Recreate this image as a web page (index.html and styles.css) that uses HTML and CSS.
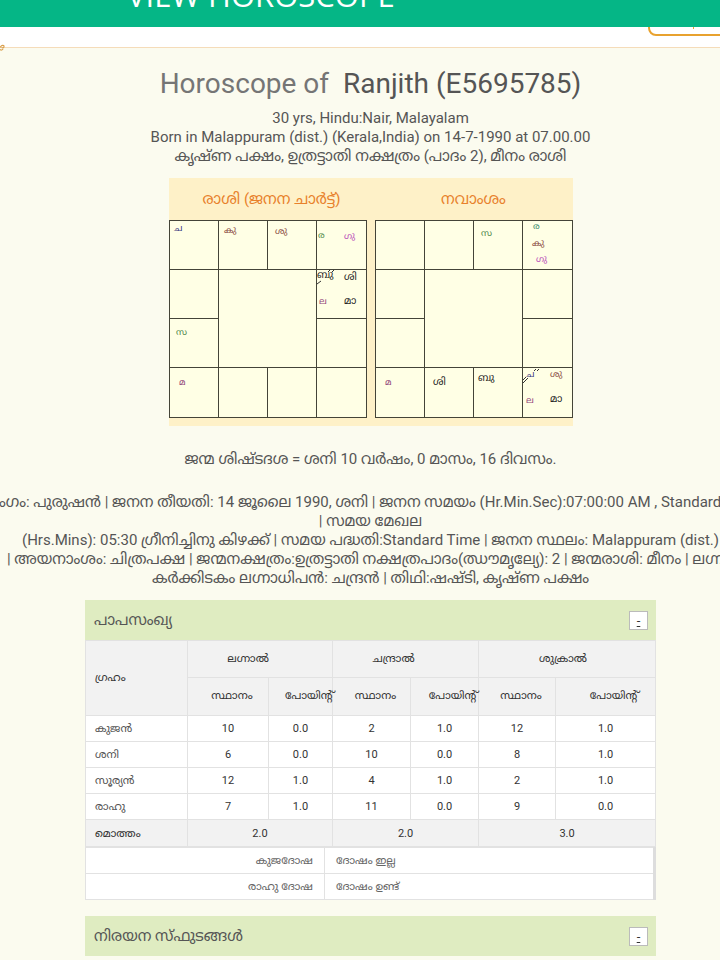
FILE: index.html
```html
<!DOCTYPE html>
<html lang="ml">
<head>
<meta charset="utf-8">
<meta name="viewport" content="width=device-width, initial-scale=1">
<title>View Horoscope</title>
<link rel="stylesheet" href="styles.css">
</head>
<body>
<header class="appbar"><h1>VIEW HOROSCOPE</h1></header>
<div class="toolbar"><button class="outline" type="button" aria-label="Options"><span class="tick"></span></button></div>
<main class="sheet">
  <svg class="curl" viewBox="0 0 6 8" aria-hidden="true"><path d="M0 3.5C1.500 1 4 .8 4 2.500S2.500 4 1.500 3.500M0 5.500C1 6.500 2.500 6 3 5" fill="none" stroke="#d9a04e" stroke-width="1.200"/></svg>
  <div class="content">
    <h2 class="title"><span>Horoscope of</span>&nbsp; Ranjith (E5695785)</h2>
    <div class="lines">
      <p>30 yrs, Hindu:Nair, Malayalam</p>
      <p>Born in Malappuram (dist.) (Kerala,India) on 14-7-1990 at 07.00.00</p>
      <p>കൃഷ്ണ പക്ഷം, ഉത്രട്ടാതി നക്ഷത്രം (പാദം 2), മീനം രാശി</p>
    </div>

    <section class="charts">
      <figure>
        <figcaption class="birth">രാശി (ജനന ചാർട്ട്)</figcaption>
        <svg class="chart" viewBox="0 0 198 198">
          <rect class="frame" x=".5" y=".5" width="197" height="197"/>
          <path class="grid" d="M49.500 0V198M147.500 0V198M0 49.500H198M0 147.500H198M0 98.500H49M148 98.500H198M98.500 0V49M98.500 148V198"/>
          <text x="5" y="11" class="navy">ച</text>
          <text x="55" y="13" class="brown">കു</text>
          <text x="106" y="14" class="brown">ശു</text>
          <text x="149" y="18" class="green">ര</text>
          <text x="175" y="19" class="pink">ഗു</text>
          <text x="148" y="58" class="ink">ബു</text>
          <text x="175" y="60" class="ink">ശി</text>
          <text x="150" y="84" class="plum">ല</text>
          <text x="175" y="84" class="ink">മാ</text>
          <path class="mark" d="M159 52L161 50M163 52L165 50M148 64L152 61"/>
          <text x="7" y="115" class="green">സ</text>
          <text x="10" y="165" class="plum">മ</text>
        </svg>
      </figure>
      <figure>
        <figcaption>നവാംശം</figcaption>
        <svg class="chart" viewBox="0 0 198 198">
          <rect class="frame" x=".5" y=".5" width="197" height="197"/>
          <path class="grid" d="M49.500 0V198M147.500 0V198M0 49.500H198M0 147.500H198M0 98.500H49M148 98.500H198M98.500 0V49M98.500 148V198"/>
          <text x="106" y="16" class="green">സ</text>
          <text x="158" y="9" class="teal">ര</text>
          <text x="157" y="26" class="brown">കു</text>
          <text x="161" y="42" class="pink">ഗു</text>
          <text x="10" y="165" class="plum">മ</text>
          <text x="58" y="165" class="ink">ശി</text>
          <text x="103" y="161" class="ink">ബു</text>
          <text x="151" y="157" class="navy">ച</text>
          <text x="175" y="157" class="brown">ശു</text>
          <text x="151" y="183" class="plum">ല</text>
          <text x="175" y="182" class="ink">മാ</text>
          <path class="mark" d="M148 163L153 158M148 160L151 157M159 151L161 149M162 151L164 149"/>
        </svg>
      </figure>
    </section>

    <div class="lines dasha"><p>ജന്മ ശിഷ്ടദശ = ശനി 10 വർഷം, 0 മാസം, 16 ദിവസം.</p></div>

    <div class="lines details">
      <p>ലിംഗം: പുരുഷൻ | ജനന തീയതി: 14 ജൂലൈ 1990, ശനി | ജനന സമയം (Hr.Min.Sec):07:00:00 AM , Standard Time</p>
      <p>| സമയ മേഖല</p>
      <p>(Hrs.Mins): 05:30 ഗ്രീനിച്ചിനു കിഴക്ക് | സമയ പദ്ധതി:Standard Time | ജനന സ്ഥലം: Malappuram (dist.)</p>
      <p>| അയനാംശം: ചിത്രപക്ഷ | ജന്മനക്ഷത്രം:ഉത്രട്ടാതി നക്ഷത്രപാദം(ഝൗമൃല്യേ): 2 | ജന്മരാശി: മീനം | ലഗ്നം:</p>
      <p>കർക്കിടകം ലഗ്നാധിപൻ: ചന്ദ്രൻ | തിഥി:ഷഷ്ടി, കൃഷ്ണ പക്ഷം</p>
    </div>

    <section class="panel">
      <div class="bar"><h3>പാപസംഖ്യ</h3><a class="toggle" href="#papa">-</a></div>
      <table class="points" id="papa">
        <colgroup><col class="c1"><col class="c2"><col class="c3"><col class="c4"><col class="c5"><col class="c6"><col class="c7"></colgroup>
        <thead>
          <tr><th rowspan="2" class="name">ഗ്രഹം</th><th colspan="2" class="group">ലഗ്നാൽ</th><th colspan="2" class="group">ചന്ദ്രാൽ</th><th colspan="2" class="last">ശുക്രാൽ</th></tr>
          <tr class="sub"><th>സ്ഥാനം</th><th class="pt">പോയിന്റ്</th><th>സ്ഥാനം</th><th class="pt">പോയിന്റ്</th><th>സ്ഥാനം</th><th class="pt">പോയിന്റ്</th></tr>
        </thead>
        <tbody>
          <tr><td class="name">കുജൻ</td><td>10</td><td>0.0</td><td>2</td><td>1.0</td><td>12</td><td>1.0</td></tr>
          <tr><td class="name">ശനി</td><td>6</td><td>0.0</td><td>10</td><td>0.0</td><td>8</td><td>1.0</td></tr>
          <tr><td class="name">സൂര്യൻ</td><td>12</td><td>1.0</td><td>4</td><td>1.0</td><td>2</td><td>1.0</td></tr>
          <tr><td class="name">രാഹു</td><td>7</td><td>1.0</td><td>11</td><td>0.0</td><td>9</td><td>0.0</td></tr>
        </tbody>
        <tfoot>
          <tr><th class="name">മൊത്തം</th><td colspan="2">2.0</td><td colspan="2">2.0</td><td colspan="2">3.0</td></tr>
        </tfoot>
      </table>
      <table class="dosha">
        <tr><th>കുജദോഷ</th><td>ദോഷം ഇല്ല</td></tr>
        <tr><th>രാഹു ദോഷ</th><td>ദോഷം ഉണ്ട്</td></tr>
      </table>
    </section>

    <section class="panel">
      <div class="bar"><h3>നിരയന സ്ഫുടങ്ങൾ</h3><a class="toggle" href="#nirayana">-</a></div>
      <div id="nirayana"></div>
    </section>
  </div>
</main>
</body>
</html>
```
FILE: styles.css
```css
* { box-sizing: border-box; }

body {
  margin: 0;
  background: #fbfbef;
  color: #555;
  font-family: Roboto, "Noto Sans Malayalam", "Noto Sans", sans-serif;
  overflow-x: hidden;
}

h1, h2, h3, p, figure { margin: 0; font-weight: 400; }

.appbar {
  display: flex;
  align-items: flex-end;
  height: 27px;
  padding: 0 0 14px 127px;
  overflow: hidden;
  background: #05b686;
  color: #fff;
}

.appbar h1 { font: 500 31px/36px "Open Sans", sans-serif; }

.toolbar {
  display: flex;
  justify-content: flex-end;
  align-items: flex-end;
  height: 20px;
  padding-bottom: 11px;
  overflow: hidden;
  background: #fff;
}

.outline {
  display: flex;
  align-items: flex-end;
  flex: none;
  width: 100px;
  height: 36px;
  margin-right: -28px;
  padding: 0 0 5px 43px;
  border: 2px solid #e8a22f;
  border-radius: 8px;
  background: #fff;
}

.tick { width: 1px; height: 3px; background: #e8a22f; }

.sheet {
  position: relative;
  border-top: 1px solid #f5dcb9;
  padding-left: 21px;
  overflow-x: clip;
  overflow-y: visible;
}

.curl { position: absolute; left: 0; top: -4px; width: 6px; height: 8px; }

.content {
  display: flex;
  flex-direction: column;
  align-items: center;
  padding: 18px 0 20px;
}

.title { font-size: 28px; line-height: 36px; white-space: nowrap; color: #555; }
.title span { color: #757575; }

.lines {
  display: flex;
  flex-direction: column;
  align-items: center;
  width: 100%;
  font-size: 15px;
  line-height: 19px;
}

.lines p { flex: none; white-space: nowrap; }

.title + .lines { padding-top: 7px; }

.charts {
  display: flex;
  gap: 8px;
  margin-top: 12px;
  padding-bottom: 8px;
  background: #fef1c8;
}

.charts figcaption {
  height: 42px;
  color: #e8812c;
  font-size: 15px;
  line-height: 42px;
  text-align: center;
}

.charts .birth { padding-left: 8px; }

.chart { display: block; width: 198px; height: 198px; }
.frame { fill: #ffffe5; stroke: #444438; }
.grid { fill: none; stroke: #444438; }
.mark { fill: none; stroke: #333; }
.chart text { font-size: 9px; }
.chart .ink { fill: #222; font-size: 10px; }
.navy { fill: #35357c; }
.brown { fill: #8a4a42; }
.green { fill: #4f8a4c; }
.teal { fill: #3a8c70; }
.pink { fill: #b94bb9; }
.plum { fill: #8f4278; }

.dasha { margin-top: 24px; }
.details { margin-top: 24px; }

.panel { width: 571px; max-width: 100%; margin-top: 12px; }
.panel + .panel { margin-top: 16px; }

.bar {
  display: flex;
  justify-content: space-between;
  align-items: center;
  height: 40px;
  padding: 0 8px 0 9px;
  background: #dfecc1;
}

.bar h3 { font-size: 15px; line-height: 20px; }

.toggle {
  width: 19px;
  height: 19px;
  border: 1px solid #bbb;
  background: #fff;
  color: #333;
  font-size: 13px;
  line-height: 18px;
  text-align: center;
}

table {
  width: 100%;
  border-collapse: collapse;
  table-layout: fixed;
  background: #fff;
  font-size: 11px;
  line-height: 15px;
}

th, td {
  height: 26px;
  padding: 0;
  border: 1px solid #e2e2e2;
  color: #333;
  font-weight: 400;
  text-align: center;
  white-space: nowrap;
}

.c1 { width: 102px; }
.c2 { width: 81px; }
.c3 { width: 64px; }
.c4 { width: 78px; }
.c5 { width: 68px; }
.c6 { width: 77px; }

thead th { height: 37px; padding-bottom: 2px; background: #f2f2f2; }
thead th.group { padding-right: 24px; }
thead th.last { padding-right: 8px; }
.sub th { height: 38px; padding-left: 8px; }
.sub th.pt { padding-left: 16px; }
th.name, td.name { padding-left: 9px; text-align: left; }
td.name { color: #555; }
tfoot th, tfoot td { height: 27px; background: #f2f2f2; }

.dosha { border: 1px solid #ddd; border-right-width: 3px; }
.dosha th { width: 42%; padding-right: 11px; color: #666; text-align: right; }
.dosha td { padding-left: 11px; color: #666; text-align: left; }
```
